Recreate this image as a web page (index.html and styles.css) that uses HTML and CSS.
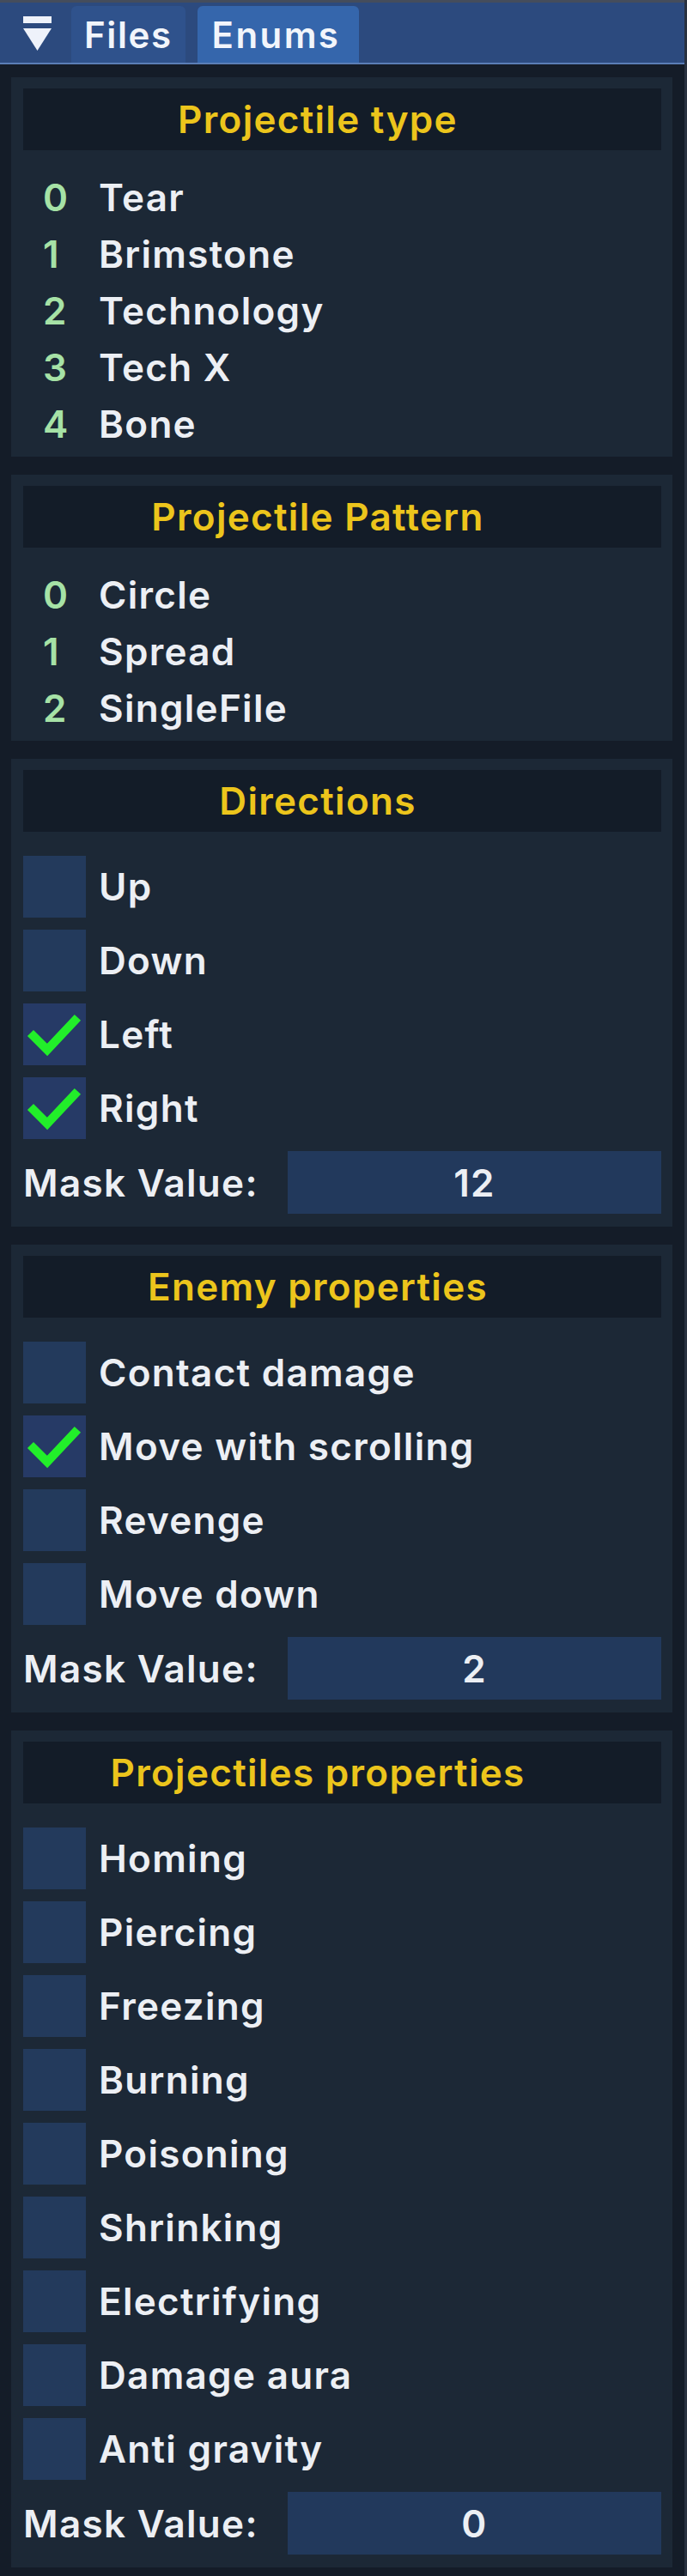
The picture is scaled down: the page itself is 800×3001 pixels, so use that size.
FILE: index.html
```html
<!DOCTYPE html>
<html lang="en">
<head>
<meta charset="utf-8">
<title>Enums</title>
<link rel="stylesheet" href="styles.css">
</head>
<body>
<div class="window">
  <div class="tabbar">
    <span class="menu-arrow">
      <svg width="34" height="40" viewBox="0 0 34 40">
        <rect x="0" y="0" width="33" height="8" fill="#eef2fa"/>
        <polygon points="0,14 33,14 16.5,40" fill="#eef2fa"/>
      </svg>
    </span>
    <div class="tab">Files</div>
    <div class="tab active">Enums</div>
  </div>

  <div class="content">
    <section class="panel">
      <div class="panel-title">Projectile type</div>
      <ul class="enum-list">
        <li><span class="idx">0</span><span class="name">Tear</span></li>
        <li><span class="idx">1</span><span class="name">Brimstone</span></li>
        <li><span class="idx">2</span><span class="name">Technology</span></li>
        <li><span class="idx">3</span><span class="name">Tech X</span></li>
        <li><span class="idx">4</span><span class="name">Bone</span></li>
      </ul>
    </section>

    <section class="panel">
      <div class="panel-title">Projectile Pattern</div>
      <ul class="enum-list">
        <li><span class="idx">0</span><span class="name">Circle</span></li>
        <li><span class="idx">1</span><span class="name">Spread</span></li>
        <li><span class="idx">2</span><span class="name">SingleFile</span></li>
      </ul>
    </section>

    <section class="panel">
      <div class="panel-title">Directions</div>
      <div class="flags">
        <div class="flag"><span class="box"></span><span>Up</span></div>
        <div class="flag"><span class="box"></span><span>Down</span></div>
        <div class="flag"><span class="box checked"><svg class="tick" viewBox="0 0 73 72"><polyline points="12,38 28,54 60,20"/></svg></span><span>Left</span></div>
        <div class="flag"><span class="box checked"><svg class="tick" viewBox="0 0 73 72"><polyline points="12,38 28,54 60,20"/></svg></span><span>Right</span></div>
        <div class="mask-row"><span class="mask-label">Mask Value:</span><span class="mask-input">12</span></div>
      </div>
    </section>

    <section class="panel">
      <div class="panel-title">Enemy properties</div>
      <div class="flags">
        <div class="flag"><span class="box"></span><span>Contact damage</span></div>
        <div class="flag"><span class="box checked"><svg class="tick" viewBox="0 0 73 72"><polyline points="12,38 28,54 60,20"/></svg></span><span>Move with scrolling</span></div>
        <div class="flag"><span class="box"></span><span>Revenge</span></div>
        <div class="flag"><span class="box"></span><span>Move down</span></div>
        <div class="mask-row"><span class="mask-label">Mask Value:</span><span class="mask-input">2</span></div>
      </div>
    </section>

    <section class="panel">
      <div class="panel-title">Projectiles properties</div>
      <div class="flags">
        <div class="flag"><span class="box"></span><span>Homing</span></div>
        <div class="flag"><span class="box"></span><span>Piercing</span></div>
        <div class="flag"><span class="box"></span><span>Freezing</span></div>
        <div class="flag"><span class="box"></span><span>Burning</span></div>
        <div class="flag"><span class="box"></span><span>Poisoning</span></div>
        <div class="flag"><span class="box"></span><span>Shrinking</span></div>
        <div class="flag"><span class="box"></span><span>Electrifying</span></div>
        <div class="flag"><span class="box"></span><span>Damage aura</span></div>
        <div class="flag"><span class="box"></span><span>Anti gravity</span></div>
        <div class="mask-row"><span class="mask-label">Mask Value:</span><span class="mask-input">0</span></div>
      </div>
    </section>
  </div>
</div>
</body>
</html>
```

FILE: styles.css
```css
* { box-sizing: border-box; }

html, body {
  margin: 0;
  padding: 0;
  background: #141c28;
}

body {
  font-family: Inter, "Open Sans", "Liberation Sans", sans-serif;
  font-weight: 600;
  font-size: 44px;
  letter-spacing: 1.3px;
  color: #eceff4;
}

.window {
  width: 800px;
  height: 3001px;
  overflow: hidden;
  background: #141c28;
  border-right: 3px solid #283140;
}

/* top tab bar */
.tabbar {
  height: 75px;
  display: flex;
  align-items: flex-end;
  gap: 14px;
  padding-left: 27px;
  background: #2c4a7e;
  border-top: 3px solid #454d5c;
  border-bottom: 2px solid #5b7eb6;
}

.menu-arrow {
  align-self: center;
  display: flex;
  width: 42px;
  margin-top: 2px;
}

.tab {
  height: 66px;
  display: flex;
  align-items: center;
  padding: 0 15px;
  font-size: 42px;
  letter-spacing: 1.6px;
  color: #f2f5fb;
  background: #2f528c;
  border-radius: 6px 6px 0 0;
}

.tab.active {
  padding: 0 22px 0 17px;
  letter-spacing: 2.4px;
  background: #3566ac;
}

/* panels */
.content {
  padding: 15px 14px 0 13px;
  display: flex;
  flex-direction: column;
  gap: 21px;
}

.panel {
  background: #1c2836;
  padding: 13px 13px 15px 14px;
}

.panel-title {
  height: 72px;
  display: flex;
  align-items: center;
  justify-content: center;
  padding-right: 57px;
  background: #131c28;
  color: #ecc51c;
}

/* enum value lists */
.enum-list {
  list-style: none;
  margin: 33px 0 1px;
  padding: 0 0 0 23px;
  display: flex;
  flex-direction: column;
  gap: 22px;
}

.enum-list li {
  height: 44px;
  line-height: 44px;
  display: flex;
}

.idx {
  width: 65px;
  color: #a6e2a6;
}

/* flag checkboxes */
.flags {
  margin-top: 28px;
  display: flex;
  flex-direction: column;
  gap: 14px;
}

.flag {
  height: 72px;
  display: flex;
  align-items: center;
  gap: 15px;
}

.box {
  width: 73px;
  height: 72px;
  flex: none;
  background: #233a5c;
  display: flex;
}

.box.checked {
  background: #263a66;
}

.tick {
  width: 73px;
  height: 72px;
}

.tick polyline {
  fill: none;
  stroke: #22ee2a;
  stroke-width: 10;
  stroke-linecap: square;
  stroke-linejoin: miter;
}

.mask-row {
  height: 73px;
  display: flex;
  align-items: center;
}

.mask-label {
  width: 308px;
  flex: none;
}

.mask-input {
  flex: 1;
  height: 73px;
  display: flex;
  align-items: center;
  justify-content: center;
  background: #22395c;
}
```
